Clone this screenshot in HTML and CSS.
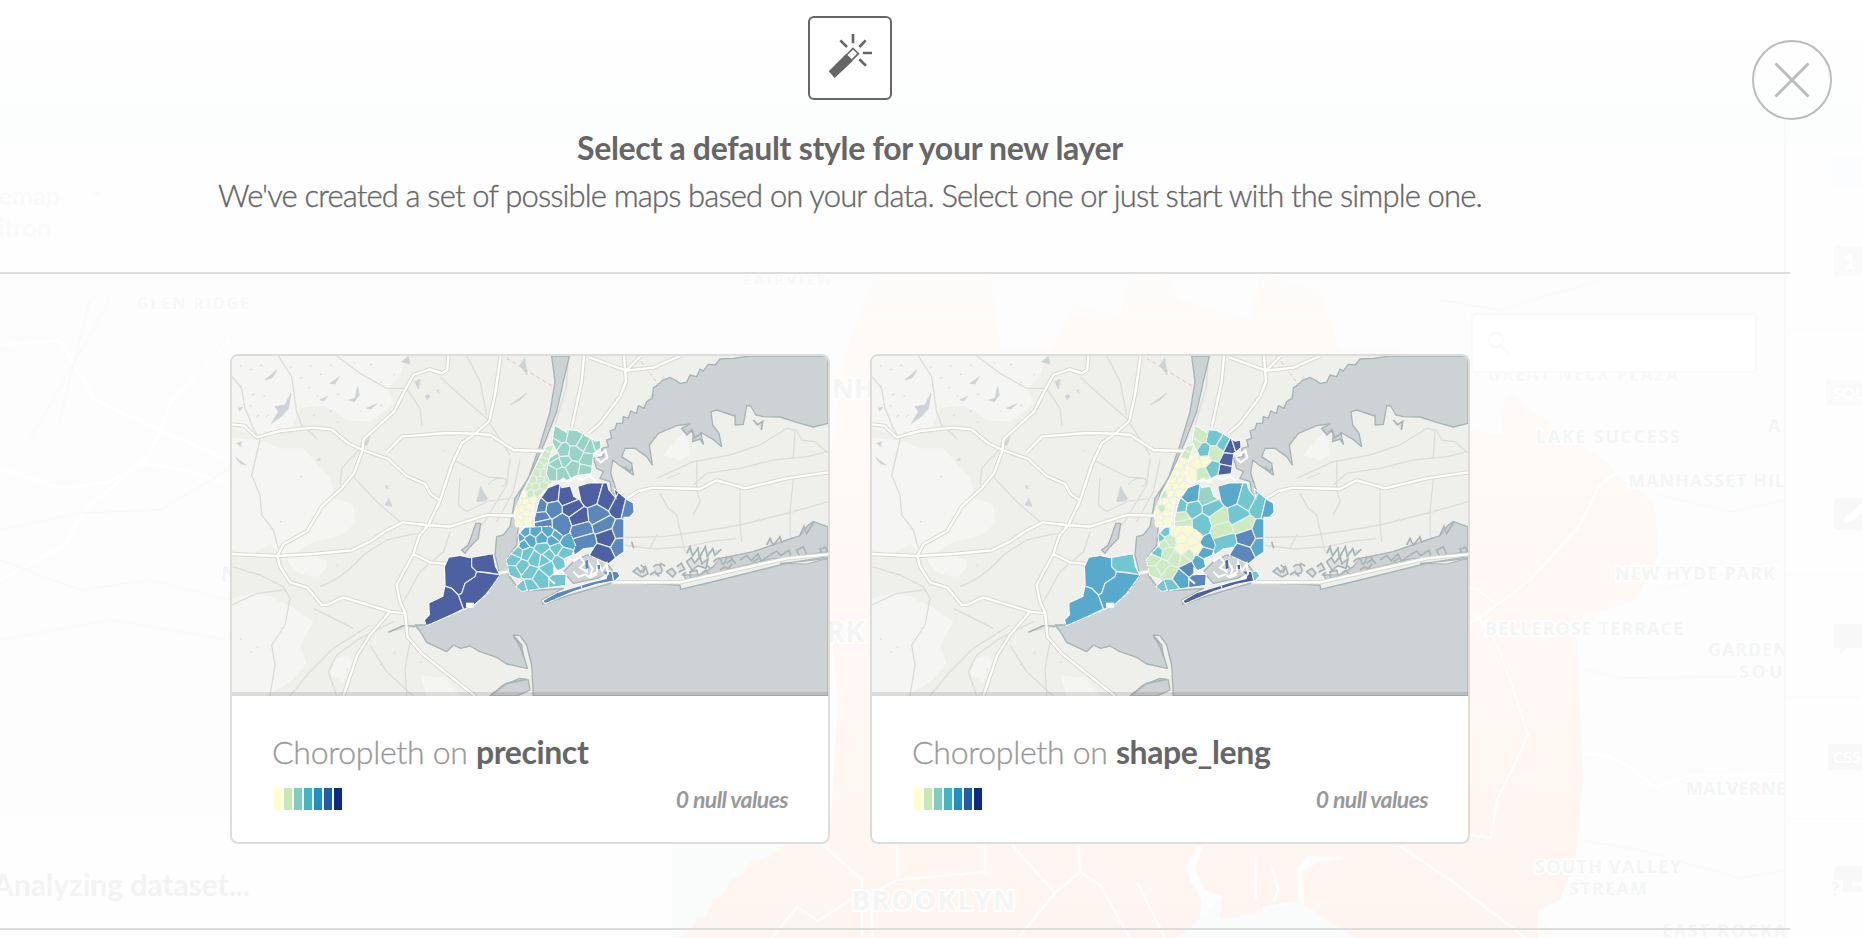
FILE: index.html
```html
<!DOCTYPE html>
<html lang="en">
<head>
<meta charset="utf-8">
<title>Select a default style</title>
<link rel="stylesheet" href="styles.css">
</head>
<body>
<svg class="backdrop" viewBox="0 0 1862 938" aria-hidden="true">
  <defs>
    <linearGradient id="fade" x1="0" y1="0" x2="0" y2="1"><stop offset="0" stop-color="#fff8f3" stop-opacity=".35"/><stop offset=".5" stop-color="#fff8f4"/><stop offset="1" stop-color="#fff5f0"/></linearGradient>
    <linearGradient id="head" x1="0" y1="0" x2="0" y2="1"><stop offset="0" stop-color="#fefffe"/><stop offset="1" stop-color="#fcfdfd"/></linearGradient>
    <clipPath id="mapClip"><path d="M0 274H1785V938H672V817H0Z"/></clipPath>
  </defs>
  <rect width="1862" height="144" fill="url(#head)"/>
  <g clip-path="url(#mapClip)">
    <rect y="274" width="1785" height="664" fill="#fdfdfd"/>
    <path d="M672 817H860L690 938H672Z" fill="#fafbfb"/>
    <path fill="url(#fade)" d="M875 274L845 354L828 470V600L838 700L830 830L805 840L785 845L765 858L752 860L742 876L730 880L722 896L713 900L706 916L697 918L690 930L680 938H1175L1200 925L1201 900L1190 880L1186 866L1198 846L1203 846L1195 868L1204 890L1222 896L1218 915L1223 922L1262 912V906L1298 902V868L1306 856L1344 858L1318 862L1302 872L1304 905L1355 938H1537L1538 910L1560 900L1575 860L1583 780L1578 660L1575 620L1635 600L1650 575L1658 555L1655 505L1640 490L1622 480L1605 460L1570 440L1545 420L1510 392L1500 410L1504 435L1470 430L1400 350L1340 350L1320 290L1260 274L1250 320L1180 300L1165 274H1130L1120 315L1075 305L1050 350H1000L990 274Z"/>
    <path d="M1180 938L1222 896L1219 920L1262 912L1298 902L1304 905L1355 938Z" fill="#fafbfb"/>
    <g class="bg-road">
      <path d="M823 845L862 880V938M897 845V880L985 872V845M897 880L870 895L873 938M1012 845L1055 893L1018 938M1078 845L1080 872L1055 893M1080 872L1100 885L1130 938M1137 882L1165 938M1255 856L1256 900M1272 868L1278 890L1274 902M1400 846L1450 880L1505 922L1525 938M1470 835L1491 838L1497 800L1512 770L1528 735L1510 680L1495 640L1476 615M1440 645L1497 605L1478 590L1470 588M1497 605L1530 580L1580 525L1600 485L1615 474M772 938L797 907L818 921L850 900M1585 754L1610 756L1635 770L1655 788L1690 775L1785 774"/>
      <path d="M0 468L60 488L110 482L140 463L185 470L228 484M0 580L65 545L85 510L150 455L172 400L230 340M0 345L60 340L95 400L160 430L228 460"/>
    </g>
    <path class="bg-line" d="M0 530L80 513L160 510L228 470M0 560L80 590L150 580L230 600M0 640L110 620L228 640M1580 668L1620 678L1785 676M1580 840L1640 850L1740 878L1785 870M1660 590L1780 560M1660 495L1730 512L1785 500M1440 300L1500 310L1600 280M1550 900L1538 915L1552 938M30 440L110 300M60 420L90 300"/>
    <g class="bg-label">
      <text x="743" y="285" textLength="89" font-size="15" fill="#f9f9f9">FAIRVIEW</text>
      <text x="137" y="309" textLength="112" font-size="16" fill="#f8f8f8">GLEN RIDGE</text>
      <text x="1488" y="381" textLength="190" font-size="17" fill="#f8f8f8">GREAT NECK PLAZA</text>
      <text x="1536" y="443" textLength="144" font-size="18">LAKE SUCCESS</text>
      <text x="1768" y="432" font-size="18">A</text>
      <text x="1628" y="487" textLength="157" font-size="18">MANHASSET HIL</text>
      <text x="1615" y="580" textLength="160" font-size="18">NEW HYDE PARK</text>
      <text x="1485" y="635" textLength="198" font-size="18">BELLEROSE TERRACE</text>
      <text x="1708" y="656" textLength="80" font-size="18">GARDEN</text>
      <text x="1739" y="678" textLength="57" font-size="18">SOUT</text>
      <text x="1686" y="795" textLength="100" font-size="18">MALVERNE</text>
      <text x="1535" y="873" textLength="146" font-size="18">SOUTH VALLEY</text>
      <text x="1569" y="895" textLength="78" font-size="18">STREAM</text>
      <text x="1662" y="937" textLength="124" font-size="18">EAST ROCKA</text>
      <text x="852" y="910" textLength="163" font-size="27">BROOKLYN</text>
      <text x="826" y="642" font-size="29">RK</text>
      <text x="832" y="398" font-size="27">NH</text>
      <text x="221" y="582" font-size="22">N</text>
    </g>
  </g>
  <rect x="1472" y="314" width="284" height="58" rx="4" fill="#fff" stroke="#fafafa" stroke-width="2"/>
  <g fill="none" stroke="#fafafa" stroke-width="2"><circle cx="1496" cy="340" r="7"/><path d="M1501 346L1510 354"/><path d="M1532 359H1738" stroke-dasharray="2 3" stroke-width="1"/></g>
  <path d="M1785 120V938" stroke="#f9f9f9" stroke-width="2"/>
  <path d="M1786 330H1862M1786 575H1862M1786 697H1862M1786 819H1862" stroke="#fbfbfb"/>
  <g fill="#f8f8f8">
    <rect x="1832" y="157" width="40" height="30" rx="3" fill="#fcfdff"/>
    <rect x="1834" y="246" width="36" height="30" rx="3" fill="#fafafa"/>
    <rect x="1826" y="380" width="44" height="26" rx="3" fill="#fafafa"/>
    <rect x="1834" y="498" width="36" height="32" rx="3"/>
    <path d="M1836 624H1862V648H1847L1840 655V648H1834V626Z"/>
    <rect x="1828" y="744" width="44" height="26" rx="3"/>
    <path d="M1836 866H1862V892H1843V880H1834V868Z"/>
  </g>
  <g class="side-text"><text x="1844" y="269" font-size="20">1</text><text x="1833" y="399" font-size="16">SQL</text><text x="1833" y="763" font-size="16">CSS</text><text x="1831" y="896" font-size="18" fill="#f6f6f6">?</text></g>
  <path d="M1843 522Q1845 514 1851 514L1862 503V512L1856 518Q1852 524 1843 522Z" fill="#fff"/><path d="M1852 884H1862" stroke="#fff" stroke-width="4"/>
  <g class="faint-text"><text x="-1" y="205" font-size="25" fill="#fafafa">emap</text><path d="M93 192H103L98 197Z" fill="#fafafa"/><text x="-2" y="237" font-size="25" fill="#fafafa">itron</text><text x="-7" y="896" font-size="30" textLength="257" fill="#f3f3f3">Analyzing dataset...</text></g>
</svg>

<svg class="defs" width="0" height="0" aria-hidden="true">
  <symbol id="basemap" viewBox="36 33 1788 1020">
    <rect x="36" y="33" width="1788" height="1020" fill="#efefec"/>
    <g fill="#f5f5f4">
      <path d="M36 33H560L540 90L505 130L520 180L450 230L380 225L310 180L240 190L215 245L100 270L36 250Z"/>
      <path d="M36 280L120 285L180 310L250 310L330 400L345 460L400 480L408 530L370 570L280 590L200 640L150 600L60 640L36 620Z"/>
      <path d="M200 640Q260 610 320 650Q320 690 280 695Q220 690 200 640ZM36 760L120 740L220 790L280 830L240 900L260 960L210 1010L140 1053H36ZM340 950Q400 910 400 960L370 1010L330 990ZM600 990L680 1000L720 1053H620Z"/>
      <path d="M1330 330L1400 250L1410 330L1380 345Z"/>
    </g>
    <g class="minor">
      <path d="M36 95L65 130L75 190L100 250L120 285L95 390L120 450L125 510L160 555L175 610M175 33L215 95L230 200L245 240L290 280M350 33L420 85L500 130L560 130L600 190L605 240M660 95L730 160L800 220L870 330M740 33L780 110L800 210M400 395L470 470L540 530M36 665L120 690L190 725L210 760L195 840L155 900L165 960L150 1053M36 780L110 745L190 735M300 725Q370 700 430 630L500 585L590 565M450 840L340 910L270 980L210 1053M520 830L420 880L350 930L325 980L350 1053M450 900L500 980L580 1053M570 890L555 970L560 1053M700 345L800 395L850 400M430 300L365 370L360 420M280 790L340 820L400 850M690 560L670 620L600 680L545 780M870 340L860 420L800 520L740 600M900 345L880 440L830 530M720 400L715 480L740 500L800 470L870 460"/>
      <path d="M1310 400L1420 350L1530 330L1620 300L1700 250L1730 255L1745 285L1785 290L1824 325M1420 420L1460 385L1560 370L1660 345L1760 335L1824 320M1320 445L1345 490L1370 510L1395 620M1430 350V430L1440 470L1420 510M1560 430V530L1565 590M1720 400L1710 500V570L1740 630M1215 577L1330 575L1440 560L1560 540L1720 500L1824 470M1210 600L1300 612L1400 605L1470 590L1550 580M1310 570L1290 610M1720 340L1725 255M1340 400L1380 385M1230 240L1320 120L1330 95M1045 33L1040 120L1005 240"/>
    </g>
    <g class="water">
      <path d="M1590 33L1540 40L1500 42L1485 60L1465 58L1450 78L1440 72L1430 95L1410 90L1400 112L1380 115L1365 105L1350 98L1330 105L1312 120L1300 130L1297 160L1280 170L1272 190L1255 182L1250 205L1232 198L1225 220L1210 215L1208 235L1190 235L1185 252L1170 258L1175 280L1160 285L1165 305L1145 310L1150 335L1120 340L1130 370L1150 380L1140 400L1170 410L1175 440L1188 465L1192 445L1172 385L1178 345L1200 362L1215 372L1240 390L1235 355L1205 335L1215 310L1245 310L1280 335L1297 360L1288 300L1315 265L1370 242L1410 237L1385 250L1395 262L1420 260L1418 290L1440 282L1450 298L1442 262L1475 280L1505 305L1497 265L1478 240L1473 200L1490 195L1545 213L1545 240L1570 238L1580 182L1592 183L1608 210L1630 215L1680 216L1730 232L1780 246L1824 235V33Z"/>
      <path d="M995 33H1048L1030 110L1010 200L975 290L940 370L900 445L890 500L895 540L890 600L862 640L865 690L900 738L960 735L1030 730L965 765L968 777L1050 750L1180 712L1380 720L1382 733L1500 705L1700 655L1824 635V1053H940L935 960L920 900L900 872L880 870L905 900L910 930L922 970L860 957L830 937L780 920L750 903L722 910L700 900L680 920L620 892L605 865L585 840L620 840L730 790L800 745L840 690L825 630L830 575L850 570L870 545L885 460L925 400L960 300L990 200L1005 110Z"/>
      <path d="M1480 665L1500 640L1600 620L1700 585L1740 572L1765 540L1780 530L1824 545V620L1760 630L1730 640L1660 640L1560 665L1400 705L1390 690L1440 690Z"/>
      <path d="M768 535L782 535L775 580L750 605L735 625L725 615L745 600ZM1030 680L1060 650L1100 630L1150 640L1180 680L1130 700L1060 715Z"/>
      <path d="M810 1053L850 1020L900 1000L925 1005L930 1035L890 1053Z" />
    </g>
    <path d="M1680 655L1760 657L1824 640L1760 648Z" fill="#efefec" stroke="#a7b3b5" stroke-width="3"/>
    <g class="marsh">
      <path d="M1240 680l12-12 10 14 14-18 8 22-18 10zM1300 665q20-15 25 5t-20 15M1340 680l16-10 12 14-10 12zM1400 650l14-12 10 16 16-20 6 22 18-14-6 28-24-8-18 14zM1410 680l20-4 6 18-24 6zM1480 650q20-20 24 0t18-14q20-4 14 18t-30 14M1560 645l20-14 14 16 20-20 10 22 24-18M1650 630l20-12 12 14 24-16 6 16M1730 615l20-10 10 22-20 10zM1800 612l16-6 8 16-18 2z"/>
      <path d="M1262 660l14 10-8 14M1290 690l14-10 14 14M1320 655l16 8M1370 665l14-10 10 18-18 8M1385 690l14-8M1440 690l16-14 12 12M1460 660l10 10M1500 675l14-10 14 8M1520 655l16-12 12 14M1600 650l16-10"/>
      <path d="M1385 250l16 20 14-16 10 24 20-14M1600 225l12 14 16-10-4 26M1215 365l14 16 8-14M1235 590l6 20M1400 625l10-20 8 28 16-24 4 30 18-34 6 30 16-24 6 20 20-18M1640 600l10-20 10 20 20-24 6 18M1740 570l12-26 8 22 22-36M585 845l-30-5-50 22M880 875q20 20 30 60M820 1045l40-30 60-12"/>
    </g>
    <g class="ponds">
      <path d="M135 105l35-30-12 22zM155 235l20-35-10-15 30-5 18-35-8 45-22 25zM300 165l22-10-10 12zM330 115l28-20-14 22zM385 165l20-5 8-35 5 25-15 20zM440 190l30-14-18 16zM545 50l20-15 5 22zM616 152l10-4 3 8-8 8zM50 295l14-4-2 14zM48 338l30 22-16-4zM495 425l6-4 2 10zM495 480l12-20 8 24zM585 110l16-8-6 30zM650 135l6 0v8zM870 180l50-35-20 20zM900 60l14-20 8 50zM770 470l12-45 10 20 12 15-10 8zM430 300l20-30-8 30zM55 190l14-4-10 12zM290 345l10-6v8z"/>
      <path d="M805 420q20-30 52-18q6 14-10 22" fill="none"/>
      <path d="M60 60l4 4M90 75l6-3M120 60l6 2M210 70l6-5M240 100l8-3M270 60l5 6M300 90l6-4M330 60l8 2M400 50l6 5M450 60l8-2M480 110l6 4M520 90l6-4M60 120l5 5M95 150l7-4M130 150l5 6M265 130l6-4M290 150l6 5M350 150l8-2M280 210l6 4M330 200l8-5M350 230l6 3M420 200l6-4M480 180l8 3M110 215l7-4M90 180l5 5M140 215l5-6M240 395h6M180 530h5M350 660h5M90 920l7 3M110 905l5 4M180 850l5-3M60 880l5 4M520 925l6-4M480 960l8-4M600 950l6 3M380 975l5-5M650 870l5 5M700 260l5 5M670 320l6-4"/>
    </g>
    <path d="M860 40L1000 125M1250 33L1320 125" stroke="#eab9bc" stroke-width="3" stroke-dasharray="11 10" fill="none"/>
    <g id="roads">
      <g class="road-case"><path id="roadpath" d="M36 238L72 242L110 277L180 258L280 248L335 254L385 295L428 315L505 342L560 393L615 417L630 445L660 467M685 33L682 75L665 85L630 73L580 90L555 135L522 200L430 283L428 315L402 385L365 430L305 485L262 558L190 598L172 633L180 665L210 712L262 728L305 780L325 778L370 757L510 800L556 805M36 627L170 633L280 627L395 616L450 590L500 556L548 532L620 540L690 545L800 510L885 512M500 322L545 275L680 264L765 266L812 270L880 315L975 318M842 33L825 150L808 228L765 266L725 295L695 360L660 467L625 540L598 572L580 627L530 720L540 770L556 805L562 875L605 925L680 985L765 1053M510 800L450 870L412 930L370 1053M580 627L630 652L680 657M838 684L865 680M1092 33L1085 110L1055 248M1212 33L1218 110L1200 155L1140 235L1105 265M1110 38L1218 77L1300 68L1380 33M1218 77L1262 33M1220 460L1255 438L1300 428L1440 432L1490 406L1575 430L1700 400L1824 382M1175 712L1380 712L1700 640L1824 628"/></g>
      <use href="#roadpath" class="road"/>
    </g>
    <path d="M36 1041H1824V1053H36Z" fill="#000" opacity=".1"/>
  </symbol>
</svg>

<main class="dialog">
  <button class="close" aria-label="Close"><svg viewBox="0 0 36 36" width="36" height="36"><path d="M1.5 1.5L34.500 34.500M34.500 1.500L1.500 34.500"/></svg></button>
  <header class="intro">
    <div class="wand">
      <svg viewBox="90 54 240 240" width="80" height="80">
        <path d="M146 214L197 163L218 183L164 234Z" fill="#666"/>
        <path d="M199 165L219 145L235 161L215 181Z" class="tip"/>
        <path d="M219 102V130M181 121L201 141M257 121L238 141M249 159H276M238 178L258 197" class="rays"/>
      </svg>
    </div>
    <h1>Select a default style for your new layer</h1>
    <p>We've created a set of possible maps based on your data. Select one or just start with the simple one.</p>
  </header>
  <section class="choices">
    <article class="card">
      <svg class="map" viewBox="36 33 1788 1020" data-scheme="2"><use href="#basemap" x="36" y="33" width="1788" height="1020"/></svg>
      <div class="info">
        <h2>Choropleth on <strong>precinct</strong></h2>
        <div class="meta"><div class="ramp"><i class="c1"></i><i class="c2"></i><i class="c3"></i><i class="c4"></i><i class="c5"></i><i class="c6"></i><i class="c7"></i></div><em>0 null values</em></div>
      </div>
    </article>
    <article class="card">
      <svg class="map" viewBox="36 33 1788 1020" data-scheme="3"><use href="#basemap" x="36" y="33" width="1788" height="1020"/></svg>
      <div class="info">
        <h2>Choropleth on <strong>shape_leng</strong></h2>
        <div class="meta"><div class="ramp"><i class="c1"></i><i class="c2"></i><i class="c3"></i><i class="c4"></i><i class="c5"></i><i class="c6"></i><i class="c7"></i></div><em>0 null values</em></div>
      </div>
    </article>
  </section>
</main>
<script src="map.js"></script>
</body>
</html>
```
FILE: styles.css
```css
* { box-sizing: border-box; margin: 0; padding: 0; }
body { width: 1862px; height: 938px; overflow: hidden; background: #fefefe; font-family: Lato, "Liberation Sans", sans-serif; color: #666; position: relative; }
.backdrop { position: absolute; left: 0; top: 0; width: 1862px; height: 938px; }
.defs { position: absolute; }
.bg-road { fill: none; stroke: #fff; stroke-opacity: .8; stroke-width: 2.5; }
.bg-line { fill: none; stroke: #fafafa; stroke-width: 1.5; }
.bg-label { font-family: "Open Sans", sans-serif; font-weight: 700; fill: #f4f5f5; stroke: #fefefe; stroke-width: 4; paint-order: stroke; }
.side-text { font-weight: 700; fill: #fff; }
.faint-text { font-weight: 700; }
.dialog { position: relative; height: 938px; }
.close { position: absolute; left: 1752px; top: 40px; width: 80px; height: 80px; border: 2px solid #bbb; border-radius: 50%; background: transparent; display: flex; align-items: center; justify-content: center; }
.close path { stroke: #bbb; stroke-width: 3; fill: none; }
.intro { width: 1790px; height: 274px; padding: 16px 90px 0 0; border-bottom: 2px solid #ddd; display: flex; flex-direction: column; align-items: center; white-space: nowrap; }
.wand { width: 84px; height: 84px; border: 2px solid #666; border-radius: 6px; background: #fff; flex: none; }
.wand svg { display: block; }
.tip { fill: #fff; stroke: #666; stroke-width: 5; }
.rays { fill: none; stroke: #666; stroke-width: 8; }
.intro h1 { margin-top: 27px; font-size: 32px; line-height: 42px; font-weight: 700; letter-spacing: -.32px; }
.intro p { margin-top: 5px; font-size: 31px; line-height: 42px; font-weight: 300; letter-spacing: -.85px; -webkit-text-stroke: .35px #666; }
.choices { width: 1790px; height: 656px; padding: 80px 0 0 230px; border-bottom: 2px solid #ddd; display: flex; gap: 40px; align-items: flex-start; }
.card { width: 600px; height: 490px; border: 2px solid #ddd; border-radius: 8px; background: #fff; overflow: hidden; }
.map { display: block; width: 596px; height: 340px; }
.info { padding: 35px 40px 0; }
.info h2 { font-size: 32px; line-height: 42px; font-weight: 300; color: #999; white-space: nowrap; letter-spacing: -.3px; -webkit-text-stroke: .3px #999; }
.info strong { font-weight: 700; color: #666; letter-spacing: -.4px; -webkit-text-stroke: 0; }
.meta { display: flex; justify-content: space-between; align-items: center; margin-top: 11px; height: 30px; }
.ramp { display: flex; gap: 2px; padding-left: 2px; }
.ramp i { width: 8px; height: 22px; }
.c1 { background: #ffffcc; } .c2 { background: #c7e9b4; } .c3 { background: #7fcdbb; } .c4 { background: #41b6c4; } .c5 { background: #1d91c0; } .c6 { background: #225ea8; } .c7 { background: #0c2c84; }
.meta em { font-size: 23px; line-height: 30px; font-weight: 700; font-style: italic; color: #999; white-space: nowrap; letter-spacing: -.6px; }
.minor { fill: none; stroke: #dcdcdc; stroke-width: 4; stroke-linejoin: round; }
.water { fill: #cdd2d5; stroke: #a7b3b5; stroke-width: 4; stroke-linejoin: round; }
.marsh { fill: #cdd2d5; fill-opacity: .5; stroke: #a7b3b5; stroke-width: 5; }
.ponds { fill: #cdd3d6; stroke: #d2d7d9; stroke-width: 3; }
.road-case { fill: none; stroke: #d8d8ce; stroke-width: 13; stroke-linejoin: round; }
.road { fill: none; stroke: #fff; stroke-width: 7; stroke-linejoin: round; }
.bay { fill: none; stroke: #fff; stroke-width: 6; }
```
FILE: map.js
```js
const NS = 'http://www.w3.org/2000/svg';
const COLORS = { y: '#fbf9cf', g: '#cdeac0', t: '#97d4c4', c: '#72c6d0', b: '#58a9cc', m: '#5b87bc', d: '#4c60a2' };
// Each borough: outline, then districts as [x, y, precinct class, shape_leng class].
const BOROUGHS = [
  { outline: '980,305 1000,300 985,345 980,385 1000,405 970,440 940,470 930,540 888,545 885,500 900,460 920,425 950,360',
    seeds: [[990,310,'g','g'],[978,330,'g','g'],[972,350,'g','y'],[984,365,'g','y'],[960,362,'g','y'],[970,385,'g','y'],[952,385,'g','y'],[985,402,'g','y'],[960,405,'g','y'],[940,405,'g','y'],[970,420,'g','y'],[945,425,'g','y'],[925,425,'g','y'],[955,445,'g','y'],[930,447,'g','y'],[912,450,'y','g'],[940,465,'y','y'],[915,470,'y','y'],[897,470,'y','y'],[925,485,'y','y'],[905,490,'y','g'],[890,500,'y','y'],[920,505,'y','y'],[900,515,'y','y'],[922,525,'y','y'],[895,535,'y','y']] },
  { outline: '1005,243 1040,264 1043,256 1070,258 1100,275 1125,290 1140,287 1142,307 1120,325 1112,385 1070,390 1040,405 990,407 980,385 990,340 1015,325 998,290',
    seeds: [[1018,270,'t','g'],[1065,280,'t','c'],[1000,300,'t','g'],[1030,320,'t','c'],[1000,333,'t','y'],[1065,325,'t','g'],[1110,305,'t','d'],[1105,345,'t','d'],[1098,378,'t','d'],[1055,370,'t','c'],[1012,355,'t','y'],[1032,348,'t','y'],[995,385,'t','y'],[1025,385,'t','g'],[1132,298,'t','d'],[1090,295,'t','c']] },
  { outline: '960,465 985,430 1015,418 1025,430 1050,425 1060,455 1085,470 1075,425 1110,415 1160,415 1165,435 1190,465 1185,435 1220,465 1238,475 1241,500 1228,515 1210,515 1210,620 1195,630 1165,655 1110,630 1125,605 1090,610 1065,628 1050,590 1030,575 1010,555 990,545 945,547 945,520 955,480',
    seeds: [[990,452,'d','b'],[1042,458,'d','t'],[1110,450,'d','b'],[1163,465,'d','c'],[1195,482,'d','c'],[1055,490,'d','c'],[998,492,'m','c'],[963,517,'m','g'],[1025,535,'m','c'],[1075,518,'d','g'],[1135,512,'m','c'],[1085,555,'m','g'],[1150,540,'m','g'],[1228,490,'m','b'],[1162,575,'d','m'],[1202,560,'m','b'],[1095,590,'m','c'],[1204,600,'m','b'],[1145,628,'d','m'],[968,538,'m','g'],[960,485,'m','c']] },
  { outline: '895,570 915,548 990,545 1030,575 1050,565 1065,600 1055,630 1030,640 1035,665 1015,675 1000,665 1000,690 1037,690 1035,720 960,730 905,738 890,725 910,705 870,690 860,645 880,620 900,600',
    seeds: [[915,560,'b','c'],[897,580,'b','c'],[945,560,'b','y'],[985,560,'b','y'],[930,585,'b','g'],[965,580,'b','y'],[1000,585,'b','y'],[1040,590,'b','b'],[1010,572,'b','y'],[910,600,'b','g'],[920,625,'c','g'],[968,610,'c','y'],[1010,612,'c','y'],[1030,625,'c','b'],[985,632,'c','g'],[945,640,'c','g'],[882,645,'c','g'],[905,665,'c','g'],[880,680,'c','g'],[930,685,'c','g'],[985,665,'c','m'],[955,700,'c','b'],[1015,650,'c','b'],[975,645,'c','g'],[1020,705,'c','m'],[930,720,'c','c'],[905,728,'c','c'],[893,620,'c','c']] },
  { outline: '687,638 720,633 750,640 818,628 825,665 838,690 800,745 760,780 725,795 620,840 615,825 630,810 628,775 670,755 677,720 675,665',
    cells: [['687,630 755,630 755,665 770,680 765,695 735,715 725,745 715,750 695,730 670,722 670,640','d','b'],['755,620 830,620 845,690 800,682 770,680 755,665','d','c'],['770,680 845,690 800,745 760,790 730,792 715,750 725,745 735,715 765,695','d','b'],['670,722 695,730 715,750 730,792 610,850 600,800 660,740','d','b']] },
  { outline: '970,768 1010,745 1060,730 1110,714 1160,702 1165,680 1190,680 1198,692 1185,706 1130,716 1060,738 976,774',
    seeds: [[1050,740,'m','d'],[1120,714,'m','d'],[1240,690,'m','c']] }
];

// Keeps the part of a polygon that is nearer to a than to b.
function nearer(poly, a, b) {
  const f = p => (p[0] - b[0]) ** 2 + (p[1] - b[1]) ** 2 - (p[0] - a[0]) ** 2 - (p[1] - a[1]) ** 2;
  const out = [];
  poly.forEach((p, i) => {
    const q = poly[(i + 1) % poly.length], u = f(p), v = f(q);
    if (u >= 0) out.push(p);
    if ((u >= 0) !== (v >= 0)) {
      const t = u / (u - v);
      out.push([p[0] + t * (q[0] - p[0]), p[1] + t * (q[1] - p[1])]);
    }
  });
  return out;
}

function add(parent, name, attrs) {
  const el = document.createElementNS(NS, name);
  for (const k in attrs) el.setAttribute(k, attrs[k]);
  parent.appendChild(el);
  return el;
}

document.querySelectorAll('.map').forEach(svg => {
  const scheme = +svg.dataset.scheme;
  BOROUGHS.forEach((b, i) => {
    const id = 'clip' + scheme + i;
    add(add(svg, 'clipPath', { id }), 'polygon', { points: b.outline });
    add(svg, 'polygon', { points: b.outline, fill: '#fff', stroke: '#fff', 'stroke-width': 6, 'stroke-dasharray': '14 3' });
    const g = add(svg, 'g', { 'clip-path': `url(#${id})`, stroke: '#e6eff3', 'stroke-width': 3.5 });
    (b.cells || []).forEach(c => add(g, 'polygon', { points: c[0], fill: COLORS[c[scheme - 1]] }));
    (b.seeds || []).forEach(s => {
      let cell = [[500, 200], [1300, 200], [1300, 900], [500, 900]];
      b.seeds.forEach(o => { if (o !== s) cell = nearer(cell, s, o); });
      add(g, 'polygon', { points: cell.map(p => p.join()).join(' '), fill: COLORS[s[scheme]] });
    });
  });
  add(svg, 'path', { class: 'bay', d: 'M1060 650l20-14 14 18-14 14 20 12 4-30 14 22-8 20 20-10 4-30 12 26 14-22 4 30-20 14M1060 680l16 16 20-8 14 10 20-10M1120 325l20 5 16-14 6 22-20 14-14-14M1010 415l20-14 14 10 20-14 24 6 20-10 20 14M1000 690l20-14 14 10M985 700l20 16' });
  add(svg, 'path', { fill: '#fff', d: 'M738 773h24v15h-24z' });
  add(svg, 'path', { fill: COLORS[scheme === 2 ? 'm' : 'd'], d: 'M1096 648l8-4 2 26-8 2zM1132 660l8 0v12h-6zM1150 680l10 0v10z' });
});
```
